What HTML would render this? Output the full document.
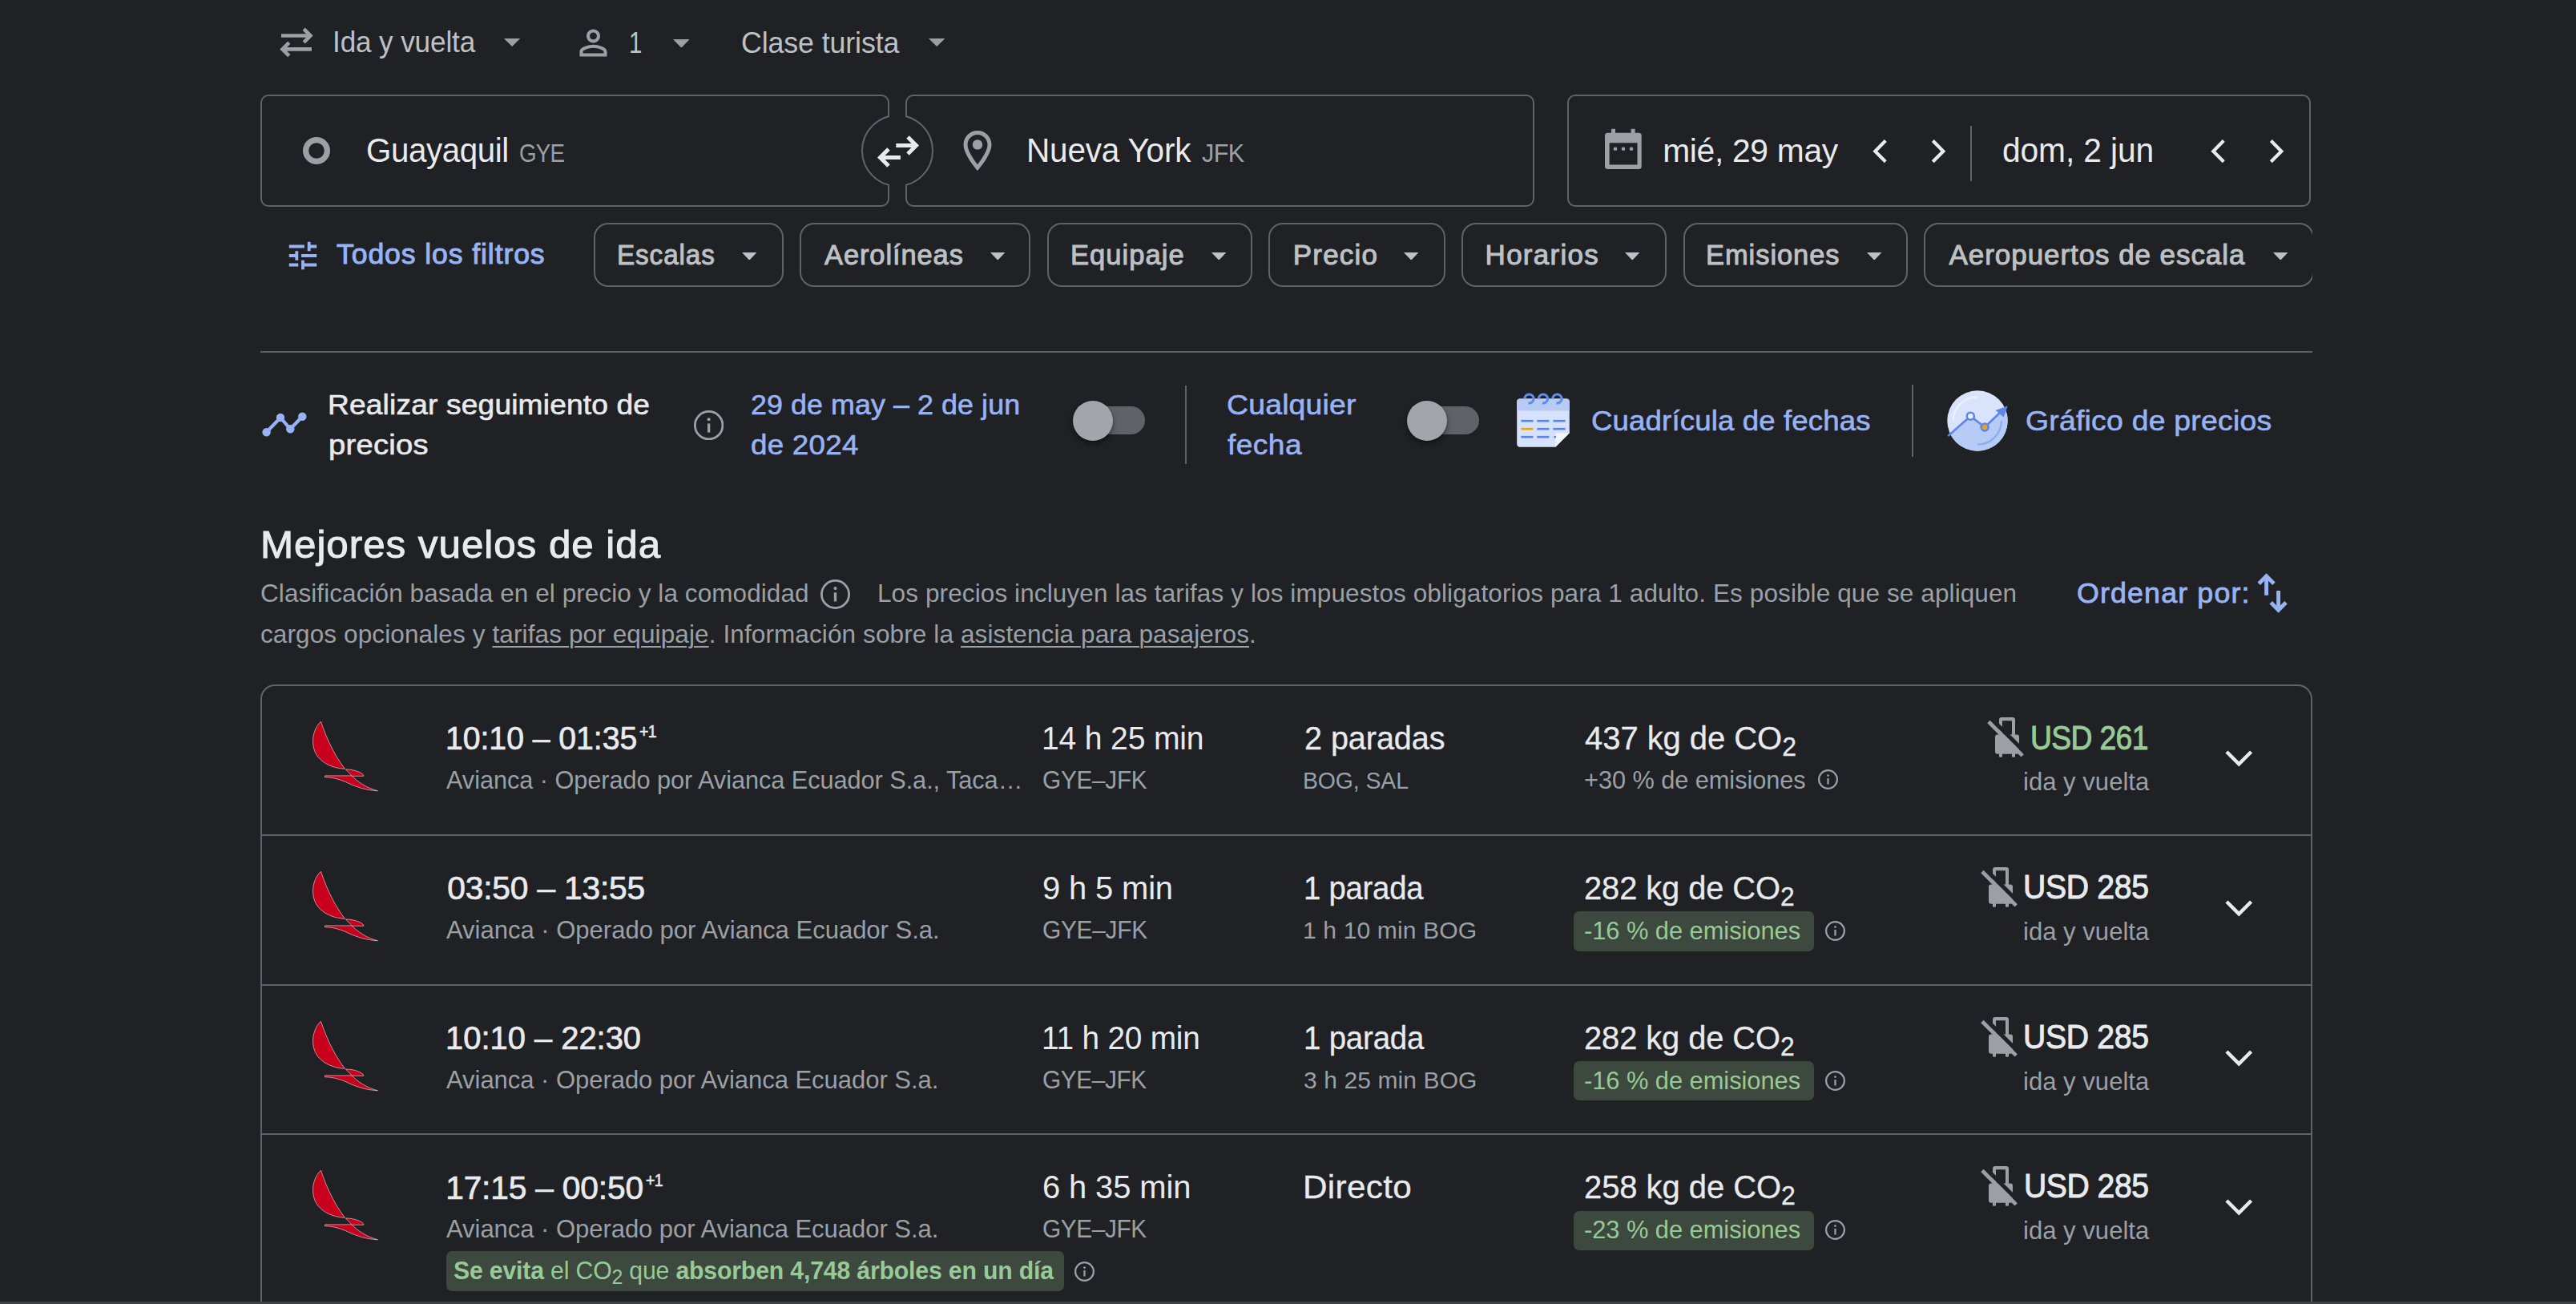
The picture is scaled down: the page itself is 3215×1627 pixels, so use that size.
<!DOCTYPE html>
<html><head><meta charset="utf-8"><title>Google Flights</title>
<style>
html,body{margin:0;padding:0;}
body{width:3215px;height:1627px;overflow:hidden;background:#202124;position:relative;font-family:"Liberation Sans",sans-serif;}
.tx{position:absolute;white-space:nowrap;font-family:"Liberation Sans",sans-serif;}
.tx u{text-decoration-thickness:2px;text-underline-offset:4px;}

</style></head><body>
<svg class="ng" style="position:absolute;left:345px;top:30px;" width="50" height="46" viewBox="0 0 50 46"><g fill="none" stroke="#9aa0a6" stroke-width="4.6" stroke-linecap="butt"><path d="M6,14.5 H42"/><path d="M34.2,6.2 L42.5,14.5 L34.2,22.8"/><path d="M7.5,31.4 H44"/><path d="M15.8,23.1 L7.5,31.4 L15.8,39.7"/></g></svg><svg class="ng" style="position:absolute;left:629.4px;top:48px;" width="20.200000000000045" height="10" viewBox="0 0 20.200000000000045 10"><polygon points="0,0 20.200000000000045,0 10.100000000000023,10" fill="#9aa0a6"/></svg><svg class="ng" style="position:absolute;left:714.5px;top:27.5px;" width="51" height="51" viewBox="0 0 24 24"><path fill="#9aa0a6" d="M12 5.9c1.16 0 2.1.94 2.1 2.1s-.94 2.1-2.1 2.1S9.9 9.16 9.9 8s.94-2.1 2.1-2.1m0 9c2.97 0 6.1 1.46 6.1 2.1v1.1H5.9V17c0-.64 3.13-2.1 6.1-2.1M12 4C9.79 4 8 5.79 8 8s1.79 4 4 4 4-1.79 4-4-1.79-4-4-4zm0 9c-2.670 0-8 1.34-8 4v3h16v-3c0-2.66-5.33-4-8-4z"/></svg><svg class="ng" style="position:absolute;left:839.8px;top:48.5px;" width="20.700000000000045" height="10.700000000000003" viewBox="0 0 20.700000000000045 10.700000000000003"><polygon points="0,0 20.700000000000045,0 10.350000000000023,10.700000000000003" fill="#9aa0a6"/></svg><svg class="ng" style="position:absolute;left:1159px;top:48px;" width="20.40000000000009" height="10" viewBox="0 0 20.40000000000009 10"><polygon points="0,0 20.40000000000009,0 10.200000000000045,10" fill="#9aa0a6"/></svg><div class="ng" style="position:absolute;left:325px;top:118px;width:781px;height:136px;border:2px solid #5f6368;border-radius:10px;"></div><div class="ng" style="position:absolute;left:1130px;top:118px;width:781px;height:136px;border:2px solid #5f6368;border-radius:10px;"></div><div class="ng" style="position:absolute;left:1956px;top:118px;width:924px;height:136px;border:2px solid #5f6368;border-radius:10px;"></div><div class="ng" style="position:absolute;left:1075px;top:142.5px;width:86px;height:86px;border:2px solid #5f6368;border-radius:50%;background:#202124;box-sizing:content-box;"></div><div class="ng" style="position:absolute;left:1110px;top:135px;width:20px;height:104px;background:#202124;"></div><svg class="ng" style="position:absolute;left:1090px;top:164px;" width="62" height="50" viewBox="0 0 62 50"><g fill="none" stroke="#e8eaed" stroke-width="5"><path d="M28.3,17.5 H54"/><path d="M43,7 L53.5,17.5 L43,28"/><path d="M8,32.5 H33.9"/><path d="M19,22 L8.5,32.5 L19,43"/></g></svg><svg class="ng" style="position:absolute;left:376px;top:169px;" width="38" height="38" viewBox="0 0 38 38"><circle cx="19" cy="19" r="13.4" fill="none" stroke="#9aa0a6" stroke-width="7.2"/></svg><svg class="ng" style="position:absolute;left:1189.5px;top:157.8px;" width="60" height="60" viewBox="0 0 24 24"><path fill="#9aa0a6" d="M12 2C8.13 2 5 5.13 5 9c0 5.25 7 13 7 13s7-7.75 7-13c0-3.87-3.13-7-7-7zM7 9c0-2.76 2.24-5 5-5s5 2.24 5 5c0 2.88-2.880 7.19-5 9.880C9.92 16.21 7 11.85 7 9z"/><circle cx="12" cy="9" r="2.5" fill="#9aa0a6"/></svg><svg class="ng" style="position:absolute;left:2000px;top:158px;" width="52" height="56" viewBox="0 0 52 56"><g fill="#9aa0a6"><rect x="3" y="7.8" width="45.7" height="45.1" rx="3.5"/><rect x="11" y="2.8" width="5" height="8"/><rect x="35.6" y="2.8" width="5" height="8"/></g><rect x="8.6" y="20.3" width="34.9" height="27.2" fill="#202124"/><g fill="#9aa0a6"><circle cx="16" cy="27.8" r="2.3"/><circle cx="26" cy="27.8" r="2.3"/><circle cx="36" cy="27.8" r="2.3"/></g></svg><svg class="ng" style="position:absolute;left:2337px;top:173.8px;" width="20" height="31" viewBox="0 0 20 31"><path d="M16.3,1.6 L3.3,14.65 L16.3,27.7" fill="none" stroke="#e8eaed" stroke-width="4.2"/></svg><svg class="ng" style="position:absolute;left:2411px;top:173.8px;" width="20" height="31" viewBox="0 0 20 31"><path d="M1.3,1.6 L14.3,14.65 L1.3,27.7" fill="none" stroke="#e8eaed" stroke-width="4.2"/></svg><div class="ng" style="position:absolute;left:2459px;top:156.5px;width:2px;height:69px;background:#5f6368;"></div><svg class="ng" style="position:absolute;left:2759px;top:173.8px;" width="20" height="31" viewBox="0 0 20 31"><path d="M16.3,1.6 L3.3,14.65 L16.3,27.7" fill="none" stroke="#e8eaed" stroke-width="4.2"/></svg><svg class="ng" style="position:absolute;left:2832.5px;top:173.8px;" width="20" height="31" viewBox="0 0 20 31"><path d="M1.3,1.6 L14.3,14.65 L1.3,27.7" fill="none" stroke="#e8eaed" stroke-width="4.2"/></svg><svg class="ng" style="position:absolute;left:354.5px;top:295.75px;" width="46" height="46" viewBox="0 0 24 24"><path fill="#98b3f4" d="M3 17v2h6v-2H3zM3 5v2h10V5H3zm10 16v-2h8v-2h-8v-2h-2v6h2zM7 9v2H3v2h4v2h2V9H7zm14 4v-2H11v2h10zm-6-4h2V7h4V5h-4V3h-2v6z"/></svg><svg class="ng" style="position:absolute;left:926.4px;top:314.6px;" width="18.5" height="9.699999999999989" viewBox="0 0 18.5 9.699999999999989"><polygon points="0,0 18.5,0 9.25,9.699999999999989" fill="#bdc1c6"/></svg><svg class="ng" style="position:absolute;left:1236.4px;top:314.6px;" width="18.5" height="9.699999999999989" viewBox="0 0 18.5 9.699999999999989"><polygon points="0,0 18.5,0 9.25,9.699999999999989" fill="#bdc1c6"/></svg><svg class="ng" style="position:absolute;left:1511.8px;top:314.6px;" width="18.5" height="9.699999999999989" viewBox="0 0 18.5 9.699999999999989"><polygon points="0,0 18.5,0 9.25,9.699999999999989" fill="#bdc1c6"/></svg><svg class="ng" style="position:absolute;left:1752.4px;top:314.6px;" width="18.5" height="9.699999999999989" viewBox="0 0 18.5 9.699999999999989"><polygon points="0,0 18.5,0 9.25,9.699999999999989" fill="#bdc1c6"/></svg><svg class="ng" style="position:absolute;left:2028.4px;top:314.6px;" width="18.5" height="9.699999999999989" viewBox="0 0 18.5 9.699999999999989"><polygon points="0,0 18.5,0 9.25,9.699999999999989" fill="#bdc1c6"/></svg><svg class="ng" style="position:absolute;left:2330px;top:314.6px;" width="18.5" height="9.699999999999989" viewBox="0 0 18.5 9.699999999999989"><polygon points="0,0 18.5,0 9.25,9.699999999999989" fill="#bdc1c6"/></svg><svg class="ng" style="position:absolute;left:2837.3px;top:314.6px;" width="18.5" height="9.699999999999989" viewBox="0 0 18.5 9.699999999999989"><polygon points="0,0 18.5,0 9.25,9.699999999999989" fill="#bdc1c6"/></svg><div class="ng" style="position:absolute;left:325px;top:278px;width:2560.5px;height:80px;overflow:hidden;"><div class="ng" style="position:absolute;left:416px;top:0;width:233px;height:76px;border:2px solid #5f6368;border-radius:18px;"></div><div class="ng" style="position:absolute;left:673.2px;top:0;width:284.29999999999995px;height:76px;border:2px solid #5f6368;border-radius:18px;"></div><div class="ng" style="position:absolute;left:982.3px;top:0;width:251.29999999999995px;height:76px;border:2px solid #5f6368;border-radius:18px;"></div><div class="ng" style="position:absolute;left:1258.3px;top:0;width:216.29999999999995px;height:76px;border:2px solid #5f6368;border-radius:18px;"></div><div class="ng" style="position:absolute;left:1499.4px;top:0;width:251.29999999999973px;height:76px;border:2px solid #5f6368;border-radius:18px;"></div><div class="ng" style="position:absolute;left:1775.5px;top:0;width:276.0px;height:76px;border:2px solid #5f6368;border-radius:18px;"></div><div class="ng" style="position:absolute;left:2076.4px;top:0;width:482.5999999999999px;height:76px;border:2px solid #5f6368;border-radius:18px;"></div></div><div class="ng" style="position:absolute;left:325px;top:438px;width:2561px;height:2px;background:#5f6368;"></div><svg class="ng" style="position:absolute;left:322px;top:510px;" width="66" height="40" viewBox="0 0 66 40"><g fill="#98b3f4" stroke="#98b3f4"><polyline points="10.6,29.2 28,11 40.3,25.3 55.3,9.8" fill="none" stroke-width="4.2"/><circle cx="10.6" cy="29.2" r="5.2" stroke="none"/><circle cx="28" cy="11" r="5.2" stroke="none"/><circle cx="40.3" cy="25.3" r="5.2" stroke="none"/><circle cx="55.3" cy="9.8" r="5.2" stroke="none"/></g></svg><svg class="ng" style="position:absolute;left:865.85px;top:511.85px;" width="37.3" height="37.3" viewBox="0 0 37.3 37.3"><circle cx="18.65" cy="18.65" r="17.25" fill="none" stroke="#9aa0a6" stroke-width="2.8"/><rect x="16.9715" y="16.412" width="3.3569999999999998" height="11.19" fill="#9aa0a6"/><circle cx="18.65" cy="11.189999999999998" r="2.0515" fill="#9aa0a6"/></svg><div class="ng" style="position:absolute;left:1362px;top:507px;width:67px;height:35px;background:#5f6368;border-radius:17.5px;"></div><div class="ng" style="position:absolute;left:1338.7px;top:499.7px;width:50.6px;height:50.6px;background:#a2a5ac;border-radius:50%;box-shadow:0 3px 6px rgba(0,0,0,0.5);"></div><div class="ng" style="position:absolute;left:1479px;top:481px;width:2px;height:98px;background:#5f6368;"></div><div class="ng" style="position:absolute;left:1779px;top:507px;width:67px;height:35px;background:#5f6368;border-radius:17.5px;"></div><div class="ng" style="position:absolute;left:1755.7px;top:499.7px;width:50.6px;height:50.6px;background:#a2a5ac;border-radius:50%;box-shadow:0 3px 6px rgba(0,0,0,0.5);"></div><svg class="ng" style="position:absolute;left:1890px;top:490px;" width="74" height="70" viewBox="0 0 74 70"><path d="M7.2,7.6 H64.8 A4,4 0 0 1 68.8,11.6 V50.2 L51.3,67.8 H7.2 A4,4 0 0 1 3.2,63.8 V11.6 A4,4 0 0 1 7.2,7.6Z" fill="#d6e2fb"/><path d="M7.2,7.6 H64.8 A4,4 0 0 1 68.8,11.6 V22.6 H3.2 V11.6 A4,4 0 0 1 7.2,7.6Z" fill="#b7cbf5"/><path d="M51.3,50.2 h17.5 l-17.5,17.6z" fill="#eef3fe"/><path d="M12.90,7.5 A5.6,5.6 0 1 1 17.38,12.99" fill="none" stroke="#5f8cf0" stroke-width="3"/><path d="M30.40,7.5 A5.6,5.6 0 1 1 34.88,12.99" fill="none" stroke="#5f8cf0" stroke-width="3"/><path d="M47.90,7.5 A5.6,5.6 0 1 1 52.38,12.99" fill="none" stroke="#5f8cf0" stroke-width="3"/><rect x="8.4" y="33.900000000000006" width="15.1" height="2.6" fill="#5a84e6"/><rect x="28.3" y="33.900000000000006" width="15.2" height="2.6" fill="#5a84e6"/><rect x="48.4" y="33.900000000000006" width="15.200000000000003" height="2.6" fill="#5a84e6"/><rect x="8.4" y="43.900000000000006" width="15.1" height="2.6" fill="#e8a317"/><rect x="28.3" y="43.900000000000006" width="15.2" height="2.6" fill="#5a84e6"/><rect x="48.4" y="43.900000000000006" width="15.200000000000003" height="2.6" fill="#5a84e6"/><rect x="8.4" y="53.900000000000006" width="15.1" height="2.6" fill="#5a84e6"/><rect x="28.3" y="53.900000000000006" width="15.2" height="2.6" fill="#5a84e6"/><rect x="49.4" y="53.900000000000006" width="2.6" height="2.6" fill="#5a84e6"/></svg><div class="ng" style="position:absolute;left:2386px;top:480px;width:2px;height:90px;background:#5f6368;"></div><svg class="ng" style="position:absolute;left:2428px;top:485px;" width="80" height="80" viewBox="0 0 80 80"><clipPath id="cc"><circle cx="40" cy="40" r="37.7"/></clipPath><circle cx="40" cy="40" r="37.7" fill="#d9e4fc"/><path clip-path="url(#cc)" d="M0,62 L31.3,34.2 L49.1,48 L80,18 L80,80 L0,80z" fill="#b6cbf5"/><path d="M9.8,39.3 A30,30 0 0 1 40,10.3" fill="none" stroke="#f4f7fe" stroke-width="2.2" opacity="0.75"/><path d="M70,40.2 A30,30 0 0 1 40,69.6" fill="none" stroke="#8eaef2" stroke-width="2.4"/><polyline points="3.3,59 31.3,34.2 49.1,48 71,27" fill="none" stroke="#5e86ea" stroke-width="2.6"/><polygon points="77.8,21.3 62.6,26.9 72.7,35.6" fill="#5e86ea"/><circle cx="31.3" cy="34.2" r="4.5" fill="#eef2fd" stroke="#5e86ea" stroke-width="2.6"/><circle cx="49.1" cy="48" r="4.5" fill="#e8a317" stroke="#5e86ea" stroke-width="2.6"/></svg><svg class="ng" style="position:absolute;left:1023.9000000000001px;top:723.1px;" width="37" height="37" viewBox="0 0 37 37"><circle cx="18.5" cy="18.5" r="17.1" fill="none" stroke="#9aa0a6" stroke-width="2.8"/><rect x="16.835" y="16.28" width="3.33" height="11.1" fill="#9aa0a6"/><circle cx="18.5" cy="11.1" r="2.035" fill="#9aa0a6"/></svg><svg class="ng" style="position:absolute;left:2810px;top:710px;" width="52" height="60" viewBox="0 0 52 60"><g fill="none" stroke="#98b3f4" stroke-width="4.9"><path d="M18.6,10 V32.8"/><path d="M9.2,18.2 L18.6,8.8 L28,18.2"/><path d="M33.6,27 V50"/><path d="M24.2,41.8 L33.6,51.2 L43,41.8"/></g></svg><div class="ng" style="position:absolute;left:325px;top:854px;width:2557px;height:900px;border:2px solid #5f6368;border-radius:18px;"></div><div class="ng" style="position:absolute;left:327px;top:1041px;width:2557px;height:2px;background:#5f6368;"></div><div class="ng" style="position:absolute;left:327px;top:1228px;width:2557px;height:2px;background:#5f6368;"></div><div class="ng" style="position:absolute;left:327px;top:1414px;width:2557px;height:2px;background:#5f6368;"></div><svg class="ng" style="position:absolute;left:360px;top:880px;" width="120" height="120" viewBox="0 0 120 120"><path d="M40.5,20.3 C29,31 27,52 37,64.5 C45,74 57,78.6 70.5,79.3 C60,66 49,46 40.5,20.3Z" fill="#c8001e" stroke="#f3e6e8" stroke-width="0.6"/><path d="M71.5,80 C80,80 89,82.5 93.3,86.5 L93.8,88.3 L79.5,88.3Z" fill="#c8001e" stroke="#f3e6e8" stroke-width="0.6"/><path d="M45.5,87.9 L78.8,87.9 C86,95 97,103 111.4,106.8 C98,106 86,102.5 75,97.3 C66,93 56,89.8 45.5,89.8Z" fill="#c8001e" stroke="#f3e6e8" stroke-width="0.6"/></svg><svg class="ng" style="position:absolute;left:2268.6px;top:960.35px;" width="25" height="25" viewBox="0 0 25 25"><circle cx="12.5" cy="12.5" r="11.4" fill="none" stroke="#9aa0a6" stroke-width="2.2"/><rect x="11.375" y="11.0" width="2.25" height="7.5" fill="#9aa0a6"/><circle cx="12.5" cy="7.5" r="1.375" fill="#9aa0a6"/></svg><svg class="ng" style="position:absolute;left:2469.6px;top:885px;" width="64" height="64" viewBox="0 0 64 64"><g fill="#9aa0a6"><path d="M25,32.2 V13 a3,3 0 0 1 3,-3 h14 a3,3 0 0 1 3,3 V32.2 h-4 V14.2 h-12 V32.2z"/><rect x="20" y="31.5" width="30" height="24.3" rx="3"/><rect x="25" y="54" width="4" height="5.8" rx="1.5"/><rect x="41" y="54" width="4" height="5.8" rx="1.5"/></g><path d="M11.5,8 L60,56.5" stroke="#202124" stroke-width="5.3"/><path d="M11.9,15.5 L54.2,57.8" stroke="#9aa0a6" stroke-width="4.7"/></svg><svg class="ng" style="position:absolute;left:2775.6px;top:934px;" width="38" height="26" viewBox="0 0 38 26"><path d="M3,4 L18.3,19.3 L33.6,4" fill="none" stroke="#e8eaed" stroke-width="4.5"/></svg><svg class="ng" style="position:absolute;left:360px;top:1066.9px;" width="120" height="120" viewBox="0 0 120 120"><path d="M40.5,20.3 C29,31 27,52 37,64.5 C45,74 57,78.6 70.5,79.3 C60,66 49,46 40.5,20.3Z" fill="#c8001e" stroke="#f3e6e8" stroke-width="0.6"/><path d="M71.5,80 C80,80 89,82.5 93.3,86.5 L93.8,88.3 L79.5,88.3Z" fill="#c8001e" stroke="#f3e6e8" stroke-width="0.6"/><path d="M45.5,87.9 L78.8,87.9 C86,95 97,103 111.4,106.8 C98,106 86,102.5 75,97.3 C66,93 56,89.8 45.5,89.8Z" fill="#c8001e" stroke="#f3e6e8" stroke-width="0.6"/></svg><div class="ng" style="position:absolute;left:1964.2px;top:1137.3px;width:299.7px;height:49.4px;background:#3d483f;border-radius:7px;"></div><svg class="ng" style="position:absolute;left:2278.3px;top:1149.2px;" width="25" height="25" viewBox="0 0 25 25"><circle cx="12.5" cy="12.5" r="11.4" fill="none" stroke="#9aa0a6" stroke-width="2.2"/><rect x="11.375" y="11.0" width="2.25" height="7.5" fill="#9aa0a6"/><circle cx="12.5" cy="7.5" r="1.375" fill="#9aa0a6"/></svg><svg class="ng" style="position:absolute;left:2461.6px;top:1071.9px;" width="64" height="64" viewBox="0 0 64 64"><g fill="#9aa0a6"><path d="M25,32.2 V13 a3,3 0 0 1 3,-3 h14 a3,3 0 0 1 3,3 V32.2 h-4 V14.2 h-12 V32.2z"/><rect x="20" y="31.5" width="30" height="24.3" rx="3"/><rect x="25" y="54" width="4" height="5.8" rx="1.5"/><rect x="41" y="54" width="4" height="5.8" rx="1.5"/></g><path d="M11.5,8 L60,56.5" stroke="#202124" stroke-width="5.3"/><path d="M11.9,15.5 L54.2,57.8" stroke="#9aa0a6" stroke-width="4.7"/></svg><svg class="ng" style="position:absolute;left:2775.6px;top:1120.9px;" width="38" height="26" viewBox="0 0 38 26"><path d="M3,4 L18.3,19.3 L33.6,4" fill="none" stroke="#e8eaed" stroke-width="4.5"/></svg><svg class="ng" style="position:absolute;left:360px;top:1253.7px;" width="120" height="120" viewBox="0 0 120 120"><path d="M40.5,20.3 C29,31 27,52 37,64.5 C45,74 57,78.6 70.5,79.3 C60,66 49,46 40.5,20.3Z" fill="#c8001e" stroke="#f3e6e8" stroke-width="0.6"/><path d="M71.5,80 C80,80 89,82.5 93.3,86.5 L93.8,88.3 L79.5,88.3Z" fill="#c8001e" stroke="#f3e6e8" stroke-width="0.6"/><path d="M45.5,87.9 L78.8,87.9 C86,95 97,103 111.4,106.8 C98,106 86,102.5 75,97.3 C66,93 56,89.8 45.5,89.8Z" fill="#c8001e" stroke="#f3e6e8" stroke-width="0.6"/></svg><div class="ng" style="position:absolute;left:1964.2px;top:1324.1px;width:299.7px;height:49.4px;background:#3d483f;border-radius:7px;"></div><svg class="ng" style="position:absolute;left:2278.3px;top:1336.0px;" width="25" height="25" viewBox="0 0 25 25"><circle cx="12.5" cy="12.5" r="11.4" fill="none" stroke="#9aa0a6" stroke-width="2.2"/><rect x="11.375" y="11.0" width="2.25" height="7.5" fill="#9aa0a6"/><circle cx="12.5" cy="7.5" r="1.375" fill="#9aa0a6"/></svg><svg class="ng" style="position:absolute;left:2461.6px;top:1258.7px;" width="64" height="64" viewBox="0 0 64 64"><g fill="#9aa0a6"><path d="M25,32.2 V13 a3,3 0 0 1 3,-3 h14 a3,3 0 0 1 3,3 V32.2 h-4 V14.2 h-12 V32.2z"/><rect x="20" y="31.5" width="30" height="24.3" rx="3"/><rect x="25" y="54" width="4" height="5.8" rx="1.5"/><rect x="41" y="54" width="4" height="5.8" rx="1.5"/></g><path d="M11.5,8 L60,56.5" stroke="#202124" stroke-width="5.3"/><path d="M11.9,15.5 L54.2,57.8" stroke="#9aa0a6" stroke-width="4.7"/></svg><svg class="ng" style="position:absolute;left:2775.6px;top:1307.7px;" width="38" height="26" viewBox="0 0 38 26"><path d="M3,4 L18.3,19.3 L33.6,4" fill="none" stroke="#e8eaed" stroke-width="4.5"/></svg><svg class="ng" style="position:absolute;left:360px;top:1440.1px;" width="120" height="120" viewBox="0 0 120 120"><path d="M40.5,20.3 C29,31 27,52 37,64.5 C45,74 57,78.6 70.5,79.3 C60,66 49,46 40.5,20.3Z" fill="#c8001e" stroke="#f3e6e8" stroke-width="0.6"/><path d="M71.5,80 C80,80 89,82.5 93.3,86.5 L93.8,88.3 L79.5,88.3Z" fill="#c8001e" stroke="#f3e6e8" stroke-width="0.6"/><path d="M45.5,87.9 L78.8,87.9 C86,95 97,103 111.4,106.8 C98,106 86,102.5 75,97.3 C66,93 56,89.8 45.5,89.8Z" fill="#c8001e" stroke="#f3e6e8" stroke-width="0.6"/></svg><div class="ng" style="position:absolute;left:1964.2px;top:1510.5px;width:299.7px;height:49.4px;background:#3d483f;border-radius:7px;"></div><svg class="ng" style="position:absolute;left:2278.3px;top:1522.4px;" width="25" height="25" viewBox="0 0 25 25"><circle cx="12.5" cy="12.5" r="11.4" fill="none" stroke="#9aa0a6" stroke-width="2.2"/><rect x="11.375" y="11.0" width="2.25" height="7.5" fill="#9aa0a6"/><circle cx="12.5" cy="7.5" r="1.375" fill="#9aa0a6"/></svg><svg class="ng" style="position:absolute;left:2462px;top:1445.1px;" width="64" height="64" viewBox="0 0 64 64"><g fill="#9aa0a6"><path d="M25,32.2 V13 a3,3 0 0 1 3,-3 h14 a3,3 0 0 1 3,3 V32.2 h-4 V14.2 h-12 V32.2z"/><rect x="20" y="31.5" width="30" height="24.3" rx="3"/><rect x="25" y="54" width="4" height="5.8" rx="1.5"/><rect x="41" y="54" width="4" height="5.8" rx="1.5"/></g><path d="M11.5,8 L60,56.5" stroke="#202124" stroke-width="5.3"/><path d="M11.9,15.5 L54.2,57.8" stroke="#9aa0a6" stroke-width="4.7"/></svg><svg class="ng" style="position:absolute;left:2775.6px;top:1494.1px;" width="38" height="26" viewBox="0 0 38 26"><path d="M3,4 L18.3,19.3 L33.6,4" fill="none" stroke="#e8eaed" stroke-width="4.5"/></svg><div class="ng" style="position:absolute;left:557px;top:1561px;width:771px;height:50px;background:#3d483f;border-radius:7px;"></div><svg class="ng" style="position:absolute;left:1340.5px;top:1573.6px;" width="25" height="25" viewBox="0 0 25 25"><circle cx="12.5" cy="12.5" r="11.4" fill="none" stroke="#9aa0a6" stroke-width="2.2"/><rect x="11.375" y="11.0" width="2.25" height="7.5" fill="#9aa0a6"/><circle cx="12.5" cy="7.5" r="1.375" fill="#9aa0a6"/></svg><div class="ng" style="position:absolute;left:0px;top:1624px;width:3215px;height:3px;background:#3d4246;"></div>
<div id="t_ida" class="tx" style="left:414.60px;top:34.00px;font-size:37.00px;line-height:37.00px;color:#bdc1c6;letter-spacing:-0.134px;transform:scaleX(0.9493);transform-origin:0 0;">Ida y vuelta</div><div id="t_one" class="tx" style="left:785.00px;top:35.00px;font-size:37.00px;line-height:37.00px;color:#bdc1c6;letter-spacing:0.000px;transform:scaleX(0.7961);transform-origin:0 0;">1</div><div id="t_clase" class="tx" style="left:925.20px;top:35.00px;font-size:37.00px;line-height:37.00px;color:#bdc1c6;letter-spacing:-0.104px;transform:scaleX(0.9655);transform-origin:0 0;">Clase turista</div><div id="t_gye_city" class="tx" style="left:457.40px;top:167.00px;font-size:42.50px;line-height:42.50px;color:#e8eaed;letter-spacing:-0.422px;transform:scaleX(0.9484);transform-origin:0 0;">Guayaquil</div><div id="t_gye" class="tx" style="left:648.40px;top:176.00px;font-size:31.50px;line-height:31.50px;color:#9aa0a6;letter-spacing:-0.909px;transform:scaleX(0.8805);transform-origin:0 0;">GYE</div><div id="t_ny" class="tx" style="left:1281.40px;top:167.00px;font-size:42.50px;line-height:42.50px;color:#e8eaed;letter-spacing:-0.210px;transform:scaleX(0.9536);transform-origin:0 0;">Nueva York</div><div id="t_jfk" class="tx" style="left:1499.60px;top:176.00px;font-size:31.50px;line-height:31.50px;color:#9aa0a6;letter-spacing:-0.617px;transform:scaleX(0.9721);transform-origin:0 0;">JFK</div><div id="t_d1" class="tx" style="left:2075.20px;top:168.00px;font-size:40.75px;line-height:40.75px;color:#e8eaed;letter-spacing:-0.300px;">mié, 29 may</div><div id="t_d2" class="tx" style="left:2498.60px;top:167.00px;font-size:42.50px;line-height:42.50px;color:#e8eaed;letter-spacing:-0.139px;transform:scaleX(0.9593);transform-origin:0 0;">dom, 2 jun</div><div id="t_filt" class="tx" style="left:420.40px;top:299.00px;font-size:35.00px;line-height:35.00px;color:#98b3f4;letter-spacing:0.872px;transform:scaleX(1.0177);transform-origin:0 0;-webkit-text-stroke:1.0px #98b3f4;">Todos los filtros</div><div id="t_chip0" class="tx" style="left:770.40px;top:300.00px;font-size:35.00px;line-height:35.00px;color:#bdc1c6;letter-spacing:0.947px;transform:scaleX(0.9503);transform-origin:0 0;-webkit-text-stroke:1.0px #bdc1c6;">Escalas</div><div id="t_chip1" class="tx" style="left:1029.00px;top:300.00px;font-size:35.00px;line-height:35.00px;color:#bdc1c6;letter-spacing:0.902px;transform:scaleX(0.9856);transform-origin:0 0;-webkit-text-stroke:1.0px #bdc1c6;">Aerolíneas</div><div id="t_chip2" class="tx" style="left:1336.40px;top:300.00px;font-size:35.00px;line-height:35.00px;color:#bdc1c6;letter-spacing:1.042px;transform:scaleX(0.9867);transform-origin:0 0;-webkit-text-stroke:1.0px #bdc1c6;">Equipaje</div><div id="t_chip3" class="tx" style="left:1613.80px;top:300.00px;font-size:35.00px;line-height:35.00px;color:#bdc1c6;letter-spacing:1.200px;-webkit-text-stroke:1.0px #bdc1c6;">Precio</div><div id="t_chip4" class="tx" style="left:1853.60px;top:300.00px;font-size:35.00px;line-height:35.00px;color:#bdc1c6;letter-spacing:1.257px;-webkit-text-stroke:1.0px #bdc1c6;">Horarios</div><div id="t_chip5" class="tx" style="left:2128.60px;top:300.00px;font-size:35.00px;line-height:35.00px;color:#bdc1c6;letter-spacing:0.992px;transform:scaleX(0.9833);transform-origin:0 0;-webkit-text-stroke:1.0px #bdc1c6;">Emisiones</div><div id="t_chip6" class="tx" style="left:2432.60px;top:300.00px;font-size:35.00px;line-height:35.00px;color:#bdc1c6;letter-spacing:0.930px;-webkit-text-stroke:1.0px #bdc1c6;">Aeropuertos de escala</div><div id="t_track1" class="tx" style="left:409.40px;top:487.00px;font-size:35.00px;line-height:35.00px;color:#e8eaed;letter-spacing:0.154px;transform:scaleX(1.0611);transform-origin:0 0;-webkit-text-stroke:0.6px #e8eaed;">Realizar seguimiento de</div><div id="t_track2" class="tx" style="left:410.40px;top:537.00px;font-size:35.00px;line-height:35.00px;color:#e8eaed;letter-spacing:0.245px;transform:scaleX(1.0904);transform-origin:0 0;-webkit-text-stroke:0.6px #e8eaed;">precios</div><div id="t_dates1" class="tx" style="left:936.80px;top:487.00px;font-size:35.00px;line-height:35.00px;color:#98b3f4;letter-spacing:0.072px;transform:scaleX(1.0238);transform-origin:0 0;-webkit-text-stroke:0.6px #98b3f4;">29 de may – 2 de jun</div><div id="t_dates2" class="tx" style="left:936.80px;top:537.00px;font-size:35.00px;line-height:35.00px;color:#98b3f4;letter-spacing:0.254px;transform:scaleX(1.0497);transform-origin:0 0;-webkit-text-stroke:0.6px #98b3f4;">de 2024</div><div id="t_any1" class="tx" style="left:1530.60px;top:487.00px;font-size:35.00px;line-height:35.00px;color:#98b3f4;letter-spacing:0.164px;transform:scaleX(1.0686);transform-origin:0 0;-webkit-text-stroke:0.6px #98b3f4;">Cualquier</div><div id="t_any2" class="tx" style="left:1531.60px;top:537.00px;font-size:35.00px;line-height:35.00px;color:#98b3f4;letter-spacing:0.424px;transform:scaleX(1.0603);transform-origin:0 0;-webkit-text-stroke:0.6px #98b3f4;">fecha</div><div id="t_grid" class="tx" style="left:1985.60px;top:507.00px;font-size:35.00px;line-height:35.00px;color:#98b3f4;letter-spacing:0.111px;transform:scaleX(1.0471);transform-origin:0 0;-webkit-text-stroke:0.6px #98b3f4;">Cuadrícula de fechas</div><div id="t_chart" class="tx" style="left:2528.00px;top:507.00px;font-size:35.00px;line-height:35.00px;color:#98b3f4;letter-spacing:0.220px;transform:scaleX(1.0672);transform-origin:0 0;-webkit-text-stroke:0.6px #98b3f4;">Gráfico de precios</div><div id="t_head" class="tx" style="left:325.00px;top:655.00px;font-size:48.25px;line-height:48.25px;color:#e8eaed;letter-spacing:0.949px;transform:scaleX(1.0221);transform-origin:0 0;-webkit-text-stroke:1.0px #e8eaed;">Mejores vuelos de ida</div><div id="t_sub1" class="tx" style="left:325.00px;top:725.00px;font-size:31.50px;line-height:31.50px;color:#9aa0a6;letter-spacing:0.072px;">Clasificación basada en el precio y la comodidad</div><div id="t_sub2" class="tx" style="left:1095.00px;top:725.00px;font-size:31.50px;line-height:31.50px;color:#9aa0a6;letter-spacing:0.106px;">Los precios incluyen las tarifas y los impuestos obligatorios para 1 adulto. Es posible que se apliquen</div><div id="t_sub3" class="tx" style="left:325.00px;top:776.00px;font-size:31.50px;line-height:31.50px;color:#9aa0a6;letter-spacing:0.114px;">cargos opcionales y <u>tarifas por equipaje</u>. Información sobre la <u>asistencia para pasajeros</u>.</div><div id="t_sort" class="tx" style="left:2591.80px;top:722.00px;font-size:35.00px;line-height:35.00px;color:#98b3f4;letter-spacing:1.121px;transform:scaleX(1.0222);transform-origin:0 0;-webkit-text-stroke:0.8px #98b3f4;">Ordenar por:</div><div id="r0_times" class="tx" style="left:556.20px;top:901.00px;font-size:40.75px;line-height:40.75px;color:#e8eaed;letter-spacing:-0.052px;transform:scaleX(0.9624);transform-origin:0 0;-webkit-text-stroke:0.7px #e8eaed;">10:10 – 01:35</div><div id="r0_plus" class="tx" style="left:797.60px;top:902.00px;font-size:22.00px;line-height:22.00px;color:#e8eaed;letter-spacing:-0.790px;transform:scaleX(0.8866);transform-origin:0 0;-webkit-text-stroke:0.6px #e8eaed;">+1</div><div id="r0_air" class="tx" style="left:557.20px;top:958.00px;font-size:31.50px;line-height:31.50px;color:#9aa0a6;letter-spacing:-0.056px;transform:scaleX(0.9747);transform-origin:0 0;">Avianca · Operado por Avianca Ecuador S.a., Taca…</div><div id="r0_dur" class="tx" style="left:1300.40px;top:901.00px;font-size:40.75px;line-height:40.75px;color:#e8eaed;letter-spacing:-0.208px;transform:scaleX(0.9610);transform-origin:0 0;">14 h 25 min</div><div id="r0_route" class="tx" style="left:1301.40px;top:958.00px;font-size:31.50px;line-height:31.50px;color:#9aa0a6;letter-spacing:-0.317px;transform:scaleX(0.9462);transform-origin:0 0;">GYE–JFK</div><div id="r0_stops" class="tx" style="left:1627.60px;top:901.00px;font-size:40.75px;line-height:40.75px;color:#e8eaed;letter-spacing:-0.077px;transform:scaleX(0.9721);transform-origin:0 0;-webkit-text-stroke:0.3px #e8eaed;">2 paradas</div><div id="r0_stops2" class="tx" style="left:1626.00px;top:959.00px;font-size:29.50px;line-height:29.50px;color:#9aa0a6;letter-spacing:-0.089px;transform:scaleX(0.9627);transform-origin:0 0;">BOG, SAL</div><div id="r0_co2" class="tx" style="left:1978.40px;top:901.00px;font-size:40.75px;line-height:40.75px;color:#e8eaed;letter-spacing:-0.051px;transform:scaleX(0.9813);transform-origin:0 0;-webkit-text-stroke:0.3px #e8eaed;">437 kg de CO<span style="font-size:80%;position:relative;top:0.24em">2</span></div><div id="r0_em" class="tx" style="left:1977.40px;top:958.00px;font-size:31.50px;line-height:31.50px;color:#9aa0a6;letter-spacing:-0.048px;transform:scaleX(0.9753);transform-origin:0 0;">+30 % de emisiones</div><div id="r0_price" class="tx" style="left:2534.00px;top:900.00px;font-size:42.50px;line-height:42.50px;color:#97ca96;letter-spacing:-0.759px;transform:scaleX(0.8779);transform-origin:0 0;-webkit-text-stroke:1.0px #97ca96;">USD 261</div><div id="r0_rt" class="tx" style="left:2524.80px;top:960.00px;font-size:31.50px;line-height:31.50px;color:#9aa0a6;letter-spacing:0.018px;transform:scaleX(0.9855);transform-origin:0 0;">ida y vuelta</div><div id="r1_times" class="tx" style="left:558.20px;top:1088.00px;font-size:40.75px;line-height:40.75px;color:#e8eaed;letter-spacing:-0.183px;-webkit-text-stroke:0.7px #e8eaed;">03:50 – 13:55</div><div id="r1_air" class="tx" style="left:557.20px;top:1145.00px;font-size:31.50px;line-height:31.50px;color:#9aa0a6;letter-spacing:-0.035px;transform:scaleX(0.9862);transform-origin:0 0;">Avianca · Operado por Avianca Ecuador S.a.</div><div id="r1_dur" class="tx" style="left:1301.40px;top:1088.00px;font-size:40.75px;line-height:40.75px;color:#e8eaed;letter-spacing:-0.178px;transform:scaleX(0.9813);transform-origin:0 0;">9 h 5 min</div><div id="r1_route" class="tx" style="left:1301.40px;top:1145.00px;font-size:31.50px;line-height:31.50px;color:#9aa0a6;letter-spacing:-0.351px;transform:scaleX(0.9505);transform-origin:0 0;">GYE–JFK</div><div id="r1_stops" class="tx" style="left:1626.60px;top:1088.00px;font-size:40.75px;line-height:40.75px;color:#e8eaed;letter-spacing:-0.243px;transform:scaleX(0.9391);transform-origin:0 0;-webkit-text-stroke:0.3px #e8eaed;">1 parada</div><div id="r1_stops2" class="tx" style="left:1626.00px;top:1146.00px;font-size:29.50px;line-height:29.50px;color:#9aa0a6;letter-spacing:0.090px;transform:scaleX(1.0216);transform-origin:0 0;">1 h 10 min BOG</div><div id="r1_co2" class="tx" style="left:1977.40px;top:1088.00px;font-size:40.75px;line-height:40.75px;color:#e8eaed;letter-spacing:-0.068px;transform:scaleX(0.9771);transform-origin:0 0;-webkit-text-stroke:0.3px #e8eaed;">282 kg de CO<span style="font-size:80%;position:relative;top:0.24em">2</span></div><div id="r1_em" class="tx" style="left:1977.40px;top:1146.00px;font-size:31.50px;line-height:31.50px;color:#97ca96;letter-spacing:-0.048px;transform:scaleX(0.9793);transform-origin:0 0;">-16 % de emisiones</div><div id="r1_price" class="tx" style="left:2525.00px;top:1086.00px;font-size:42.50px;line-height:42.50px;color:#e8eaed;letter-spacing:-0.362px;transform:scaleX(0.9220);transform-origin:0 0;-webkit-text-stroke:1.0px #e8eaed;">USD 285</div><div id="r1_rt" class="tx" style="left:2524.80px;top:1147.00px;font-size:31.50px;line-height:31.50px;color:#9aa0a6;letter-spacing:0.018px;transform:scaleX(0.9855);transform-origin:0 0;">ida y vuelta</div><div id="r2_times" class="tx" style="left:556.20px;top:1275.00px;font-size:40.75px;line-height:40.75px;color:#e8eaed;letter-spacing:-0.017px;transform:scaleX(0.9800);transform-origin:0 0;-webkit-text-stroke:0.7px #e8eaed;">10:10 – 22:30</div><div id="r2_air" class="tx" style="left:557.20px;top:1332.00px;font-size:31.50px;line-height:31.50px;color:#9aa0a6;letter-spacing:-0.054px;transform:scaleX(0.9852);transform-origin:0 0;">Avianca · Operado por Avianca Ecuador S.a.</div><div id="r2_dur" class="tx" style="left:1300.40px;top:1275.00px;font-size:40.75px;line-height:40.75px;color:#e8eaed;letter-spacing:-0.210px;transform:scaleX(0.9521);transform-origin:0 0;">11 h 20 min</div><div id="r2_route" class="tx" style="left:1301.40px;top:1332.00px;font-size:31.50px;line-height:31.50px;color:#9aa0a6;letter-spacing:-0.422px;transform:scaleX(0.9468);transform-origin:0 0;">GYE–JFK</div><div id="r2_stops" class="tx" style="left:1626.60px;top:1275.00px;font-size:40.75px;line-height:40.75px;color:#e8eaed;letter-spacing:-0.182px;transform:scaleX(0.9423);transform-origin:0 0;-webkit-text-stroke:0.3px #e8eaed;">1 parada</div><div id="r2_stops2" class="tx" style="left:1627.00px;top:1333.00px;font-size:29.50px;line-height:29.50px;color:#9aa0a6;letter-spacing:0.106px;transform:scaleX(1.0167);transform-origin:0 0;">3 h 25 min BOG</div><div id="r2_co2" class="tx" style="left:1977.40px;top:1275.00px;font-size:40.75px;line-height:40.75px;color:#e8eaed;letter-spacing:-0.068px;transform:scaleX(0.9771);transform-origin:0 0;-webkit-text-stroke:0.3px #e8eaed;">282 kg de CO<span style="font-size:80%;position:relative;top:0.24em">2</span></div><div id="r2_em" class="tx" style="left:1977.40px;top:1333.00px;font-size:31.50px;line-height:31.50px;color:#97ca96;letter-spacing:-0.048px;transform:scaleX(0.9793);transform-origin:0 0;">-16 % de emisiones</div><div id="r2_price" class="tx" style="left:2525.00px;top:1273.00px;font-size:42.50px;line-height:42.50px;color:#e8eaed;letter-spacing:-0.362px;transform:scaleX(0.9220);transform-origin:0 0;-webkit-text-stroke:1.0px #e8eaed;">USD 285</div><div id="r2_rt" class="tx" style="left:2524.80px;top:1334.00px;font-size:31.50px;line-height:31.50px;color:#9aa0a6;letter-spacing:0.018px;transform:scaleX(0.9855);transform-origin:0 0;">ida y vuelta</div><div id="r3_times" class="tx" style="left:556.20px;top:1462.00px;font-size:40.75px;line-height:40.75px;color:#e8eaed;letter-spacing:-0.200px;-webkit-text-stroke:0.7px #e8eaed;">17:15 – 00:50</div><div id="r3_plus" class="tx" style="left:806.00px;top:1462.00px;font-size:22.00px;line-height:22.00px;color:#e8eaed;letter-spacing:-0.790px;transform:scaleX(0.8866);transform-origin:0 0;-webkit-text-stroke:0.6px #e8eaed;">+1</div><div id="r3_air" class="tx" style="left:557.20px;top:1518.00px;font-size:31.50px;line-height:31.50px;color:#9aa0a6;letter-spacing:-0.054px;transform:scaleX(0.9852);transform-origin:0 0;">Avianca · Operado por Avianca Ecuador S.a.</div><div id="r3_dur" class="tx" style="left:1301.40px;top:1461.00px;font-size:40.75px;line-height:40.75px;color:#e8eaed;letter-spacing:-0.136px;transform:scaleX(0.9804);transform-origin:0 0;">6 h 35 min</div><div id="r3_route" class="tx" style="left:1301.40px;top:1518.00px;font-size:31.50px;line-height:31.50px;color:#9aa0a6;letter-spacing:-0.422px;transform:scaleX(0.9468);transform-origin:0 0;">GYE–JFK</div><div id="r3_stops" class="tx" style="left:1625.60px;top:1461.00px;font-size:40.75px;line-height:40.75px;color:#e8eaed;letter-spacing:0.289px;transform:scaleX(1.0383);transform-origin:0 0;-webkit-text-stroke:0.3px #e8eaed;">Directo</div><div id="r3_co2" class="tx" style="left:1977.40px;top:1461.00px;font-size:40.75px;line-height:40.75px;color:#e8eaed;letter-spacing:-0.068px;transform:scaleX(0.9819);transform-origin:0 0;-webkit-text-stroke:0.3px #e8eaed;">258 kg de CO<span style="font-size:80%;position:relative;top:0.24em">2</span></div><div id="r3_em" class="tx" style="left:1977.40px;top:1519.00px;font-size:31.50px;line-height:31.50px;color:#97ca96;letter-spacing:-0.048px;transform:scaleX(0.9793);transform-origin:0 0;">-23 % de emisiones</div><div id="r3_price" class="tx" style="left:2526.40px;top:1459.00px;font-size:42.50px;line-height:42.50px;color:#e8eaed;letter-spacing:-0.507px;transform:scaleX(0.9205);transform-origin:0 0;-webkit-text-stroke:1.0px #e8eaed;">USD 285</div><div id="r3_rt" class="tx" style="left:2524.80px;top:1520.00px;font-size:31.50px;line-height:31.50px;color:#9aa0a6;letter-spacing:0.018px;transform:scaleX(0.9855);transform-origin:0 0;">ida y vuelta</div><div id="b_text" class="tx" style="left:566.40px;top:1570.00px;font-size:31.50px;line-height:31.50px;color:#97ca96;letter-spacing:-0.168px;transform:scaleX(0.9585);transform-origin:0 0;"><b>Se evita</b> el CO<span style="font-size:82%;position:relative;top:0.22em">2</span> que <b>absorben 4,748 árboles en un día</b></div>
</body></html>
